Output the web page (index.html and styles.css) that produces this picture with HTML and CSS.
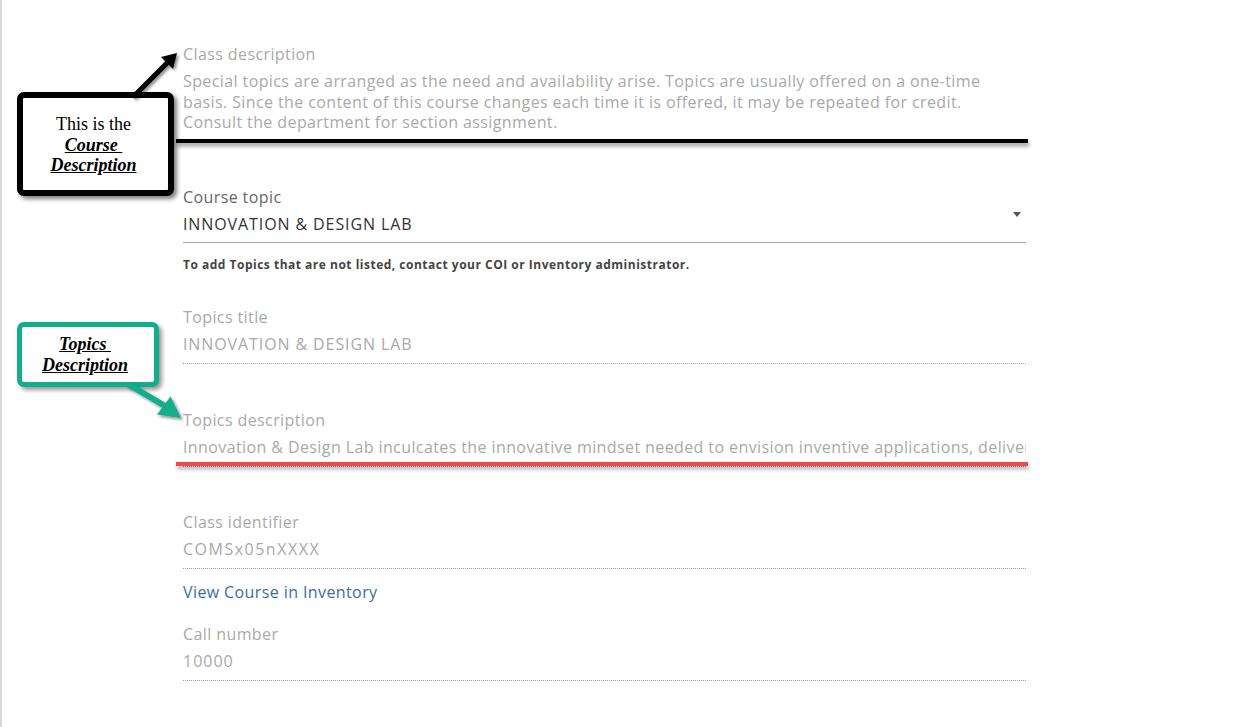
FILE: index.html
```html
<!DOCTYPE html>
<html>
<head>
<meta charset="utf-8">
<link rel="stylesheet" href="styles.css">
</head>
<body>
<div class="page">
  <div class="form">
    <div class="field disabled">
      <div class="label">Class description</div>
      <div class="value multi">Special topics are arranged as the need and availability arise. Topics are usually offered on a one-time basis. Since the content of this course changes each time it is offered, it may be repeated for credit. Consult the department for section assignment.</div>
    </div>
    <div class="field select">
      <div class="label">Course topic</div>
      <div class="value caps">INNOVATION &amp; DESIGN LAB<span class="caret"></span></div>
    </div>
    <div class="helper">To add Topics that are not listed, contact your COI or Inventory administrator.</div>
    <div class="field disabled">
      <div class="label">Topics title</div>
      <div class="value caps">INNOVATION &amp; DESIGN LAB</div>
    </div>
    <div class="field disabled">
      <div class="label">Topics description</div>
      <div class="value clip">Innovation &amp; Design Lab inculcates the innovative mindset needed to envision inventive applications, delivering</div>
    </div>
    <div class="field disabled">
      <div class="label">Class identifier</div>
      <div class="value ident">COMSx05nXXXX</div>
    </div>
    <a class="link" href="#">View Course in Inventory</a>
    <div class="field disabled">
      <div class="label">Call number</div>
      <div class="value digits">10000</div>
    </div>
  </div>

  <div class="rule rule-black"></div>
  <div class="rule rule-red"></div>

  <div class="note note-black">
    <div>This is the</div>
    <div class="em">Course&nbsp;</div>
    <div class="em">Description</div>
  </div>
  <div class="note note-teal">
    <div class="em">Topics&nbsp;</div>
    <div class="em">Description</div>
  </div>

  <svg class="arrows" width="1234" height="727" viewBox="0 0 1234 727">
    <defs>
      <filter id="sh" x="-20%" y="-20%" width="140%" height="140%">
        <feDropShadow dx="2" dy="2" stdDeviation="1.5" flood-color="#000" flood-opacity="0.45"/>
      </filter>
    </defs>
    <g filter="url(#sh)">
      <line x1="133" y1="97" x2="168" y2="62" stroke="#000" stroke-width="5"/>
      <polygon points="177,53 173,69 161,57" fill="#000"/>
      <line x1="128" y1="384" x2="165" y2="406" stroke="#12ad8d" stroke-width="6"/>
      <polygon points="181,418 157,414.5 170.5,396.5" fill="#12ad8d"/>
    </g>
  </svg>
</div>
</body>
</html>
```
FILE: styles.css
```css
html, body {
  margin: 0;
  padding: 0;
  background: #fff;
}
.page {
  position: relative;
  width: 1234px;
  height: 727px;
  box-sizing: border-box;
  border-left: 2px solid #d6d6d6;
  overflow: hidden;
  font-family: "Open Sans", "Liberation Sans", sans-serif;
}
.form {
  width: 843px;
  margin-left: 181px;
  padding-top: 44px;
  display: flex;
  flex-direction: column;
  align-items: flex-start;
  letter-spacing: 0.4px;
}
.field {
  width: 100%;
  margin-bottom: 45.5px;
}
.label {
  font-size: 16px;
  line-height: 20px;
  color: #a9a9a9;
  margin-bottom: 7px;
}
.value {
  font-size: 16px;
  line-height: 20px;
  color: #a9a9a9;
  padding-bottom: 9px;
  border-bottom: 1px dotted #9a9a9a;
}
.value.caps {
  letter-spacing: 0.9px;
}
.value.ident {
  letter-spacing: 1.5px;
}
.value.digits {
  letter-spacing: 1px;
}
.value.multi {
  max-width: 810px;
  line-height: 20.5px;
  padding-bottom: 9px;
  border-bottom: none;
}
.value.clip {
  white-space: nowrap;
  overflow: hidden;
}
.field.select {
  margin-bottom: 0;
}
.field.select .label {
  color: #666;
}
.field.select .value {
  color: #333;
  border-bottom: 1px solid #aaa;
  position: relative;
  padding-bottom: 8px;
}
.caret {
  position: absolute;
  right: 5px;
  top: -2px;
  width: 0;
  height: 0;
  border-left: 4.5px solid transparent;
  border-right: 4.5px solid transparent;
  border-top: 5px solid #555;
}
.helper {
  margin-top: 14px;
  margin-bottom: 35px;
  font-size: 12px;
  line-height: 15px;
  font-weight: 700;
  letter-spacing: 0.5px;
  color: #444;
}
.link {
  margin-top: -33px;
  margin-bottom: 22.5px;
  font-size: 16px;
  line-height: 20px;
  color: #3d6d9c;
  text-decoration: none;
}
.rule {
  position: absolute;
  left: 174px;
  width: 852px;
  height: 4px;
}
.rule-black {
  top: 139px;
  background: #000;
  box-shadow: 1px 3px 4px rgba(0,0,0,0.45);
}
.rule-red {
  top: 462px;
  background: #f2474b;
  box-shadow: 1px 3px 4px rgba(0,0,0,0.35);
}
.note {
  position: absolute;
  box-sizing: border-box;
  background: #fff;
  border-radius: 7px;
  font-family: "Liberation Serif", serif;
  font-size: 18px;
  line-height: 20.5px;
  color: #000;
  text-align: center;
  display: flex;
  flex-direction: column;
  justify-content: center;
}
.note .em {
  font-weight: 700;
  font-style: italic;
  text-decoration: underline;
}
.note-black {
  left: 15px;
  top: 92px;
  width: 157px;
  height: 104px;
  border: 6px solid #000;
  box-shadow: 3px 3px 4px rgba(0,0,0,0.5);
  padding-top: 2px;
  padding-right: 4px;
}
.note-teal {
  left: 15px;
  top: 322px;
  width: 142px;
  height: 65px;
  border: 5px solid #12ad8d;
  box-shadow: 3px 3px 4px rgba(0,0,0,0.4);
  padding-right: 6px;
}
.arrows {
  position: absolute;
  left: -2px;
  top: 0;
  pointer-events: none;
}
```
